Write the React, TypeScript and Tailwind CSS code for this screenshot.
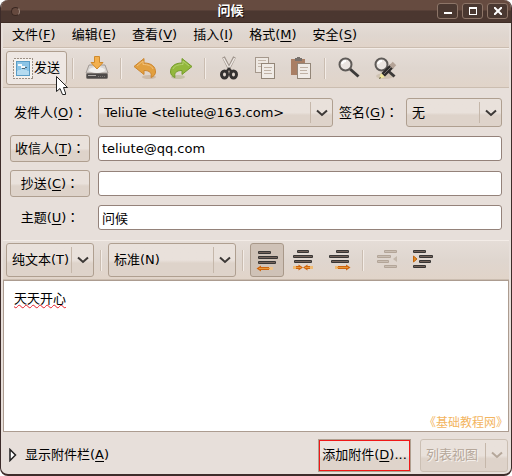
import { useState, type ReactNode } from "react";

const Key = ({ k }: { k: string }) => (
  <>
    (<span className="underline underline-offset-2">{k}</span>)
  </>
);

const Colon = () => (
  <span className="font-['Noto_Sans_CJK_TC',sans-serif]">：</span>
);

const surface =
  "rounded-[3px] border border-[#af9f90] bg-linear-to-b from-[#e9e1db] from-50% to-[#ded3ca] to-60%";

const Chevron = () => (
  <svg width="12" height="8" viewBox="0 0 12 8" fill="none" stroke="currentColor" strokeWidth="2">
    <path d="M1 1.5 L6 6 L11 1.5" />
  </svg>
);

type PickProps = {
  id?: string;
  label?: string;
  value: string;
  className: string;
  disabled?: boolean;
};

function Pick({ id, label, value, className, disabled }: PickProps) {
  return (
    <div className={`relative ${className}`}>
      <select
        id={id}
        aria-label={label}
        disabled={disabled}
        className={`h-full w-full appearance-none rounded-[3px] border pl-[5px] bg-linear-to-b from-[#e9e1db] from-50% to-[#ded3ca] to-60% ${
          disabled ? "border-[#cbbfb3] text-[#b5a79a] opacity-100 text-shadow-[1px_1px_0_#f8f4f1]" : "border-[#af9f90] text-black"
        }`}
      >
        <option>{value}</option>
      </select>
      <span
        className={`pointer-events-none absolute inset-y-1 right-0 flex w-[23px] items-center justify-center border-l border-[#c5b7aa] ${
          disabled ? "text-[#b5a79a]" : "text-[#3c3836]"
        }`}
      >
        <Chevron />
      </span>
    </div>
  );
}

const Separator = ({ className }: { className: string }) => (
  <span className={`flex shrink-0 justify-center ${className}`}>
    <span className="h-[21px] w-[2px] border-r border-[#f3ece7] bg-[#cabdb1]" />
  </span>
);

const Tool = ({ label, children }: { label: string; children: ReactNode }) => (
  <button aria-label={label} className="flex h-[34px] w-9 shrink-0 items-center justify-center">
    {children}
  </button>
);

const Icon = ({ children }: { children: ReactNode }) => (
  <svg width="24" height="24" viewBox="0 0 24 24" fill="none">
    {children}
  </svg>
);

const SendIcon = () => (
  <svg width="20" height="21" viewBox="0 0 20 21" fill="none" shapeRendering="crispEdges">
    <rect x="0.5" y="0.5" width="19" height="20" stroke="#9c9085" strokeDasharray="2 1" />
    <rect x="1" y="1" width="18" height="19" fill="#f6f2ee" />
    <rect x="3.5" y="3.5" width="13" height="14" fill="#8cc4e6" stroke="#5a9cc6" />
    <path d="M4 17 V13 L9 11 L16 13 V17Z" fill="#b5dbf0" />
    <path d="M5 6 H9 V8 H12 V10 H8 V8 H5Z" fill="#f2f8fb" />
    <path d="M9 10.500 H12 M12 9.500 H14" stroke="#4f6573" />
  </svg>
);

const SaveIcon = () => (
  <Icon>
    <path d="M4 9 H20 L23 17 H1Z" fill="#d9d5d2" stroke="#a29b96" />
    <ellipse cx="12" cy="14" rx="8" ry="3" fill="#f1efed" />
    <rect x="1.5" y="17.5" width="21" height="5" rx="1" fill="#4d4a49" stroke="#77716d" />
    <path d="M3 19.5 H11" stroke="#b5b0ac" />
    <path d="M13 20.5 H21" stroke="#807a77" strokeDasharray="1 1" />
    <path d="M9.5 .5 H14.5 V6.5 H18 L12 13 L6 6.5 H9.5Z" fill="#f3b04e" stroke="#d08a2c" />
  </Icon>
);

const UndoIcon = () => (
  <Icon>
    <ellipse cx="16" cy="21" rx="7" ry="2" fill="#cdbba9" />
    <path d="M1 10.5 L11 2.5 V7 C19 7 22.5 11 22.5 16 C22.5 18 21 20.5 18 21.5 C19 17 17 14.5 11 14.5 V18.5Z" fill="#e2a040" stroke="#cc8630" />
    <path d="M4 10 L10 5 V8.5 C15 8.5 19 10 20 13" stroke="#f0c07a" />
  </Icon>
);

const RedoIcon = () => (
  <Icon>
    <ellipse cx="9" cy="21" rx="7" ry="2" fill="#c5c1a6" />
    <path d="M23 10.5 L13 2.5 V7 C5 7 1.5 11 1.5 16 C1.5 18 3 20.5 6 21.5 C5 17 7 14.5 13 14.5 V18.5Z" fill="#93b83c" stroke="#759c2c" />
    <path d="M20 10 L14 5 V8.5 C9 8.5 5 10 4 13" stroke="#b4d070" />
  </Icon>
);

const CutIcon = () => (
  <Icon>
    <path d="M6.5 1 L14 16" stroke="#9d928a" strokeWidth="3" />
    <path d="M17.5 1 L10 16" stroke="#9d928a" strokeWidth="3" />
    <path d="M6.5 2 L13 14 M17.5 2 L11 14" stroke="#eee8e3" strokeWidth="1.5" />
    <ellipse cx="7.5" cy="18.5" rx="3" ry="3.5" stroke="#353231" strokeWidth="3" />
    <ellipse cx="16.5" cy="18.5" rx="3" ry="3.5" stroke="#353231" strokeWidth="3" />
    <path d="M9 16 L12 12.500 L15 16" stroke="#353231" strokeWidth="2" />
  </Icon>
);

const CopyIcon = () => (
  <Icon>
    <rect x="2.5" y="1.5" width="13" height="15" fill="#eee8e2" stroke="#a5988c" />
    <path d="M5 4.5 H13 M5 7.5 H10 M5 10.5 H8" stroke="#c3b6aa" />
    <rect x="8.5" y="7.5" width="13" height="15" fill="#f0ebe6" stroke="#938678" />
    <path d="M11 11.5 H19 M11 14.5 H18 M11 17.5 H19" stroke="#bfb1a4" />
  </Icon>
);

const PasteIcon = () => (
  <Icon>
    <rect x="2" y="3" width="14" height="16" fill="#a97f65" />
    <rect x="6" y="2" width="7" height="3" fill="#77706b" />
    <rect x="8" y="1" width="3" height="2" fill="#77706b" />
    <rect x="8.5" y="7.5" width="13" height="15" fill="#f0ebe6" stroke="#938678" />
    <path d="M11 11.5 H19 M11 14.5 H18 M11 17.5 H19" stroke="#bfb1a4" />
  </Icon>
);

const Lens = () => (
  <>
    <path d="M13 13 L21.500 20.500" stroke="#3c3a39" strokeWidth="3" />
    <circle cx="8.5" cy="8.5" r="6" fill="#ebe5e1" stroke="#5f5b58" strokeWidth="2" />
    <path d="M5 8 Q6 5 9 5" stroke="#fff" strokeWidth="2" />
  </>
);

const FindIcon = () => (
  <Icon>
    <Lens />
  </Icon>
);

const ReplaceIcon = () => (
  <Icon>
    <ellipse cx="12" cy="20" rx="9" ry="3" fill="#cfc2b2" />
    <Lens />
    <path d="M10 19 L19 10" stroke="#2f2d2c" strokeWidth="5" />
    <path d="M18 11 L21.5 7.5" stroke="#b3a296" strokeWidth="5" />
    <path d="M11 18 L18 11" stroke="#77716d" />
    <path d="M6 23 L8 17 L12 21Z" fill="#f0e79a" />
    <path d="M6 23 L7 21 L8 22Z" fill="#222" />
  </Icon>
);

type Bar = [x: number, y: number, w: number];
const Bars = ({ bars, color = "#383635", shine = "#73625a" }: { bars: Bar[]; color?: string; shine?: string }) => (
  <>
    {bars.map(([x, y, w]) => (
      <g key={y}>
        <rect x={x} y={y} width={w} height="3" rx="1" fill={color} />
        <rect x={x + 1} y={y + 1} width={w - 2} height="1" fill={shine} />
      </g>
    ))}
  </>
);

const AlignLeft = () => (
  <Icon>
    <Bars bars={[[3, 3, 13], [3, 8, 20], [3, 13, 18]]} />
    <path d="M13 20.5 H18" stroke="#efc48a" strokeWidth="3" />
    <path d="M1.5 20.5 L6 17.5 V19 H14 V22 H6 V23.5Z" fill="#cf640c" />
    <path d="M4 20.5 H15" stroke="#e8993c" />
  </Icon>
);

const AlignCenter = () => (
  <Icon>
    <Bars bars={[[6, 2, 12], [2, 7, 20], [3, 12, 18]]} />
    <path d="M2 19.5 H7 M17 19.5 H22" stroke="#efbb74" strokeWidth="3" />
    <path d="M5 18 H7.5 V16.5 L12 19.5 L7.5 22.5 V21 H5Z" fill="#cf640c" />
    <path d="M19 18 H16.5 V16.5 L12 19.5 L16.5 22.5 V21 H19Z" fill="#cf640c" />
    <path d="M5 19.5 H10 M14 19.5 H19" stroke="#e8993c" />
  </Icon>
);

const AlignRight = () => (
  <Icon>
    <Bars bars={[[9, 2, 13], [2, 7, 20], [4, 12, 18]]} />
    <path d="M8 19.5 H13" stroke="#efbb74" strokeWidth="3" />
    <path d="M23.5 19.5 L19 16.5 V18 H11 V21 H19 V22.5Z" fill="#cf640c" />
    <path d="M10 19.5 H21" stroke="#e8993c" />
  </Icon>
);

const Outdent = () => (
  <Icon>
    <Bars bars={[[9, 2, 13], [2, 7, 14], [2, 12, 12], [9, 17, 13]]} color="#b3a598" shine="#c9bdb2" />
    <path d="M22 8 V14 L18 11Z" fill="#c3b7ab" />
  </Icon>
);

const Indent = () => (
  <Icon>
    <Bars bars={[[2, 2, 13], [8, 7, 14], [8, 12, 12], [2, 17, 13]]} />
    <path d="M2.5 8 V14 L6 11Z" fill="#e08a24" stroke="#c0640c" />
  </Icon>
);

const Pointer = () => (
  <svg className="pointer-events-none absolute top-[25px] left-[50px]" width="12" height="20" viewBox="0 0 12 20">
    <path d="M.5 .5 V15.5 L4 12.5 L6.5 18.5 H9.5 V17 L7.5 11.5 H11.5Z" fill="#fff" stroke="#222" />
  </svg>
);

type FormatToolProps = { label: string; active?: boolean; disabled?: boolean; children: ReactNode };
const FormatTool = ({ label, active, children, disabled }: FormatToolProps) => (
  <button
    aria-label={label}
    disabled={disabled}
    className={`flex h-[34px] w-[34px] shrink-0 items-center justify-center rounded-[3px] border ${
      active ? "border-[#a89889] bg-[#cfc2b7]" : "border-transparent"
    }`}
  >
    {children}
  </button>
);

const barFill = "bg-linear-to-b from-[#e5ddd7] via-[#dfd6cf] to-[#e1d4c9]";
const toolbar = `mx-[2px] flex h-10 shrink-0 items-center border-y border-t-[#f3ece7] border-b-[#cbbdb0] px-[3px] ${barFill}`;
const field =
  "h-[25px] w-full min-w-0 rounded-[3px] border border-[#94827a] bg-white px-[3px] text-black outline-none";
const titleButton =
  "flex h-4 w-[21px] items-center justify-center rounded-[3px] border border-[#8d7568] bg-[#4a3831]";

const menus = [
  ["文件", "F"],
  ["编辑", "E"],
  ["查看", "V"],
  ["插入", "I"],
  ["格式", "M"],
  ["安全", "S"],
];

export default function App() {
  const [to, setTo] = useState("teliute@qq.com");
  const [cc, setCc] = useState("");
  const [subject, setSubject] = useState("问候");
  const [body, setBody] = useState("天天开心");

  return (
    <div className="flex min-h-screen flex-col overflow-hidden rounded-lg border-x border-b-2 border-[#3d2c2a] bg-[#e7dfda] font-['DejaVu_Sans','Noto_Sans_CJK_SC',sans-serif] text-[13px] leading-5 text-black">
      <header className="flex h-[23px] shrink-0 items-center border-b border-[#3e2c25] bg-linear-to-b from-[#664b40] from-45% to-[#4b3730] to-50% px-[3px]">
        <span className="w-5 pl-[7px]">
          <span className="block size-[9px] rounded-full border border-[#3a2822] border-r-[#a08c80] bg-[#65493e]" />
        </span>
        <h1 className="flex-1 text-center font-bold text-white text-shadow-[1px_1px_0_#1c1210]">问候</h1>
        <div className="flex w-[71px] gap-1">
          <button aria-label="最小化" className={titleButton}>
            <span className="mt-1 h-[2px] w-2 bg-white" />
          </button>
          <button aria-label="最大化" className={titleButton}>
            <span className="size-2 border border-t-2 border-white" />
          </button>
          <button aria-label="关闭" className={titleButton}>
            <svg width="8" height="8" viewBox="0 0 8 8" stroke="#fff" strokeWidth="2">
              <path d="M0 0 L8 8 M8 0 L0 8" />
            </svg>
          </button>
        </div>
      </header>

      <nav className={`mx-[2px] flex h-[25px] shrink-0 items-center gap-4 border-b border-[#cbbdb0] px-[9px] ${barFill}`}>
        {menus.map(([name, k]) => (
          <button key={k} className="whitespace-nowrap">
            {name}
            <Key k={k} />
          </button>
        ))}
      </nav>

      <div role="toolbar" aria-label="邮件" className={toolbar}>
        <div className="relative">
          <button className="flex h-[34px] w-[61px] items-center gap-[1px] rounded-[3px] border border-[#af9f90] bg-[#eee7e3] pl-[6px] whitespace-nowrap">
            <SendIcon />
            发送
          </button>
          <Pointer />
        </div>
        <Separator className="w-3" />
        <Tool label="保存"><SaveIcon /></Tool>
        <Separator className="w-3" />
        <Tool label="撤销"><UndoIcon /></Tool>
        <Tool label="重做"><RedoIcon /></Tool>
        <Separator className="w-3" />
        <Tool label="剪切"><CutIcon /></Tool>
        <Tool label="复制"><CopyIcon /></Tool>
        <Tool label="粘贴"><PasteIcon /></Tool>
        <Separator className="w-3" />
        <Tool label="查找"><FindIcon /></Tool>
        <Tool label="替换"><ReplaceIcon /></Tool>
      </div>

      <div className="grid grid-cols-[80px_1fr] items-center gap-2 px-[9px] py-[10px]">
        <label htmlFor="from" className="pl-1 whitespace-nowrap">
          发件人<Key k="O" /><Colon />
        </label>
        <div className="flex items-center">
          <Pick id="from" value="TeliuTe <teliute@163.com>" className="h-[29px] min-w-0 flex-1" />
          <label htmlFor="signature" className="w-[73px] shrink-0 pl-[6px] whitespace-nowrap">
            签名<Key k="G" /><Colon />
          </label>
          <Pick id="signature" value="无" className="h-[29px] w-24 shrink-0" />
        </div>

        <button className={`h-[27px] whitespace-nowrap ${surface}`}>
          收信人<Key k="T" /><Colon />
        </button>
        <input aria-label="收信人" className={field} value={to} onChange={(e) => setTo(e.target.value)} />

        <button className={`h-[27px] whitespace-nowrap ${surface}`}>
          抄送<Key k="C" /><Colon />
        </button>
        <input aria-label="抄送" className={field} value={cc} onChange={(e) => setCc(e.target.value)} />

        <label htmlFor="subject" className="text-center whitespace-nowrap">
          主题<Key k="U" /><Colon />
        </label>
        <input id="subject" className={field} value={subject} onChange={(e) => setSubject(e.target.value)} />
      </div>

      <div role="toolbar" aria-label="格式" className={toolbar}>
        <Pick label="编辑模式" value="纯文本(T)" className="h-[34px] w-[88px]" />
        <Separator className="w-[14px]" />
        <Pick label="段落样式" value="标准(N)" className="h-[34px] w-32" />
        <Separator className="w-[14px]" />
        <div className="flex gap-[2px]">
          <FormatTool label="左对齐" active><AlignLeft /></FormatTool>
          <FormatTool label="居中"><AlignCenter /></FormatTool>
          <FormatTool label="右对齐"><AlignRight /></FormatTool>
        </div>
        <Separator className="w-[14px]" />
        <div className="flex gap-[2px]">
          <FormatTool label="减少缩进" disabled><Outdent /></FormatTool>
          <FormatTool label="增加缩进"><Indent /></FormatTool>
        </div>
      </div>

      <main className="relative mx-[2px] flex flex-1 border border-[#ac9c90] bg-white">
        <textarea
          aria-label="正文"
          spellCheck={false}
          value={body}
          onChange={(e) => setBody(e.target.value)}
          className="flex-1 resize-none bg-transparent px-[10px] py-2 underline decoration-[#e8202a] decoration-wavy decoration-1 underline-offset-1 outline-none"
        />
        <span className="pointer-events-none absolute right-0 bottom-0 text-xs text-[#f3b55f]">《基础教程网》</span>
      </main>

      <footer className="flex h-[42px] shrink-0 items-center gap-[9px] pt-1 pr-[3px] pl-2">
        <button className="flex items-center gap-2 whitespace-nowrap">
          <svg width="8" height="14" viewBox="0 0 8 14">
            <path d="M1 1.5 V12.5 L6.5 7Z" fill="#fff" stroke="#222" strokeWidth="1.500" />
          </svg>
          <span>
            显示附件栏<Key k="A" />
          </span>
        </button>
        <button className="ml-auto h-[33px] w-[93px] border border-[#af9f90] bg-linear-to-b from-[#ece5e0] from-50% to-[#dfd4cb] to-60% whitespace-nowrap inset-shadow-[0_0_0_1px_#f01818]">
          添加附件<Key k="D" />...
        </button>
        <Pick label="附件视图" value="列表视图" disabled className="h-[33px] w-[88px]" />
      </footer>
    </div>
  );
}
